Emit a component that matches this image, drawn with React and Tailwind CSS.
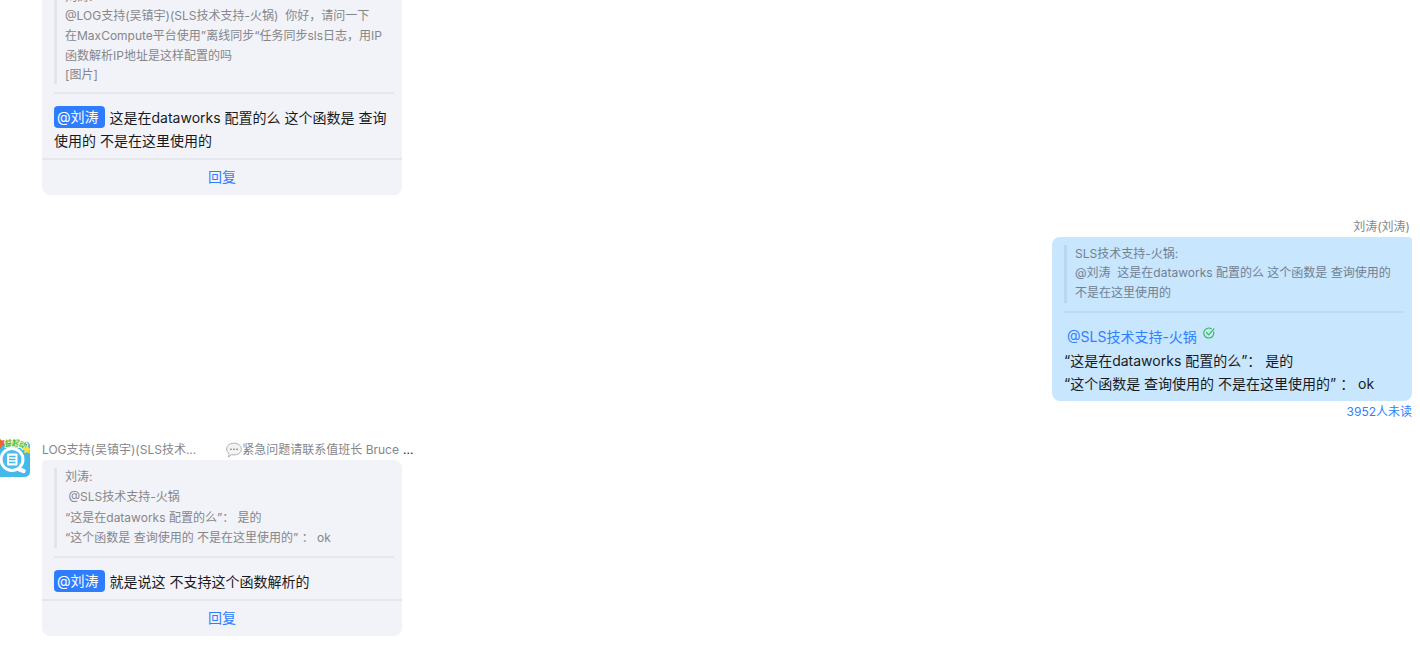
import React from 'react';
import clsx from 'clsx';


const messages = [
    {
        id: 1,
        quote: [
            {text: '刘涛:', height: 'leading-[18px]'},
            {text: '@LOG支持(吴镇宇)(SLS技术支持-火锅)  你好，请问一下', height: 'leading-5'},
            {text: '在MaxCompute平台使用”离线同步“任务同步sls日志，用IP', height: 'leading-5'},
            {text: '函数解析IP地址是这样配置的吗', height: 'leading-5'},
            {text: '[图片]', height: 'leading-[18px]'},
        ],
        mention: '刘涛',
        text: ['这是在dataworks 配置的么 这个函数是 查询', '使用的 不是在这里使用的'],
    },
    {
        id: 2,
        mine: true,
        sender: '刘涛(刘涛)',
        quote: [
            {text: 'SLS技术支持-火锅:', height: 'leading-[18px]'},
            {text: '@刘涛  这是在dataworks 配置的么 这个函数是 查询使用的', height: 'leading-5'},
            {text: '不是在这里使用的', height: 'leading-5'},
        ],
        mention: 'SLS技术支持-火锅',
        text: ['“这是在dataworks 配置的么”： 是的', '“这个函数是 查询使用的 不是在这里使用的” ： ok'],
        unread: '3952人未读',
    },
    {
        id: 3,
        sender: 'LOG支持(吴镇宇)(SLS技术...',
        status: '紧急问题请联系值班长 Bruce',
        quote: [
            {text: '刘涛:', height: 'leading-[18px]'},
            {text: ' @SLS技术支持-火锅', height: 'leading-[22px]'},
            {text: '“这是在dataworks 配置的么”： 是的', height: 'leading-5'},
            {text: '“这个函数是 查询使用的 不是在这里使用的” ： ok', height: 'leading-5'},
        ],
        mention: '刘涛',
        text: ['就是说这 不支持这个函数解析的'],
    },
]


const Avatar = () => (
    <svg className="w-[30px] h-10 shrink-0" viewBox="0 0 30 40" aria-hidden="true">
        <path d="M0 4h25a5 5 0 0 1 5 5v26a5 5 0 0 1-5 5H0z" fill="#43b9ea"/>
        <circle cx="12" cy="22.500" r="11" fill="#4bbcec" stroke="#fff" strokeWidth="3"/>
        <path d="M19.500 32.500l4 1.500" stroke="#fff" strokeWidth="4.500" strokeLinecap="round"/>
        <rect x="7" y="16.500" width="10.500" height="12" rx="1" fill="#fff"/>
        <path d="M9 19.500h6.500M9 22.500h6.500M9 25.500h6.500" stroke="#43b9ea" strokeWidth="1.300"/>
        {/* festival lettering over the top edge */}
        <g fontSize="8" fontWeight="700" fill="#4fb83c" stroke="#f4ffe9" strokeWidth="2" strokeLinejoin="round"
           paintOrder="stroke" textAnchor="middle">
            <text x="8.500" y="9" transform="rotate(-8 8.500 6)">益</text>
            <text x="16" y="9" transform="rotate(4 16 6)">起</text>
            <text x="23" y="11" transform="rotate(20 23 8)">动</text>
        </g>
        <path d="M0 2l2 1.500L4.500 3 3.800 6 5 9 2 8.500 0 12z" fill="#f0642d"/>
        <path d="M27.500 9l.8 2.300 2.200.2-1.700 1.700.5 2.600-2.200-1.200-2.400 1.200.4-2.600-2-1.800 2.700-.3z" fill="#ffe033"
              stroke="#ffe033" strokeWidth="1"/>
    </svg>
)

const BubbleIcon = () => (
    <svg className="w-4 h-4 shrink-0" viewBox="0 0 16 16" aria-hidden="true">
        <path d="M8 1.200c4.200 0 7.300 2.400 7.300 5.900s-3.100 5.800-7.300 5.800c-.9 0-1.800-.1-2.600-.3-.8 1.200-1.900 2-3.400 2.300.8-1 1.100-2.100.9-3.500C1.500 10.400.7 8.900.7 7.100.7 3.600 3.800 1.200 8 1.200z"
              fill="#f3f3f3" stroke="#b0b0b0" strokeWidth="1"/>
        <circle cx="5" cy="7.200" r=".8" fill="#666"/>
        <circle cx="8" cy="7.200" r=".8" fill="#666"/>
        <circle cx="11" cy="7.200" r=".8" fill="#666"/>
    </svg>
)

const ReadIcon = () => (
    <svg className="w-3 h-3 ml-1.5 mt-0.5" viewBox="0 0 12 12" fill="none" stroke="#34b853"
         strokeWidth="1.100" strokeLinecap="round" strokeLinejoin="round" aria-hidden="true">
        <path d="M10.600 4.700A5 5 0 1 1 8.300 1.700"/>
        <path d="M3.500 5.500l2.200 2.300L11 1.800"/>
    </svg>
)

const Quote = ({lines, mine}) => (
    <blockquote
        className={clsx('border-l-[3px] pl-2 text-xs whitespace-pre', mine ? 'border-[#b9d7f0] text-[#6f8191]' : 'border-[#e4e5e9] text-[#85868a]')}>
        {lines.map((line, index) => (
            <p key={index} className={line.height}>{line.text}</p>
        ))}
    </blockquote>
)

const Message = ({message}) => {
    const {mine, sender, status, quote, mention, text, unread} = message

    return (
        <div className={clsx('flex flex-col w-[360px]', mine && 'ml-auto')}>
            {sender && (
                <div
                    className={clsx('flex flex-row text-xs leading-5 whitespace-nowrap text-[#85868a]', mine && 'justify-end pr-0.5')}>
                    <span>{sender}</span>
                    {status && (
                        <span className="flex flex-row items-center ml-[30px]">
                            <BubbleIcon/>{status}
                            <span className="ml-1 text-[#171a1d]">...</span>
                        </span>
                    )}
                </div>
            )}
            <div
                className={clsx('pt-2 overflow-hidden', mine ? 'rounded-lg rounded-tr-sm bg-[#c9e6ff]' : 'rounded-lg rounded-tl-sm bg-[#f2f3f8]')}>
                <div className="pl-3 pr-2 pb-1.5">
                    <Quote lines={quote} mine={mine}/>
                    <div className={clsx('mt-2 mb-3 h-0.5', mine ? 'bg-[#bddbf4]' : 'bg-[#e6e7ec]')}></div>
                    <div className="text-sm leading-[23px] whitespace-pre text-[#171a1d]">
                        {mine && (
                            <p className="flex flex-row items-start pl-[3px] pb-px">
                                <a href="#" className="text-[#2f80ff]">@{mention}</a>
                                <ReadIcon/>
                            </p>
                        )}
                        {text.map((line, index) => (
                            <p key={index} className="flex flex-row">
                                {!mine && index === 0 && (
                                    <a href="#"
                                       className="h-[22px] mr-[5px] pl-[3px] pr-1.5 rounded bg-[#2f7dff] leading-[22px] text-white">@{mention}</a>
                                )}
                                <span>{line}</span>
                            </p>
                        ))}
                    </div>
                </div>
                {!mine && (
                    <button
                        className="block w-full h-[37px] pb-0.5 border-t-2 border-[#e6e7ec] text-sm text-[#2f80ff] cursor-pointer">回复</button>
                )}
            </div>
            {unread && (
                <a href="#" className="self-end text-xs leading-[22px] text-[#2f80ff]">{unread}</a>
            )}
        </div>
    )
}

const App = () => {
    const [first, second, third] = messages

    return (
        <main
            className="w-full min-h-screen overflow-hidden bg-white font-['Inter','Noto_Sans_CJK_SC',sans-serif]">
            {/* scrolled list, the top of the first message is out of view */}
            <div className="-mt-5 pl-[42px]">
                <Message message={first}/>
            </div>
            <div className="mt-[22px] pr-2">
                <Message message={second}/>
            </div>
            <div className="mt-3.5 flex flex-row items-start gap-3">
                <Avatar/>
                <div className="pt-[3px]">
                    <Message message={third}/>
                </div>
            </div>
        </main>
    );
}

export default App;
